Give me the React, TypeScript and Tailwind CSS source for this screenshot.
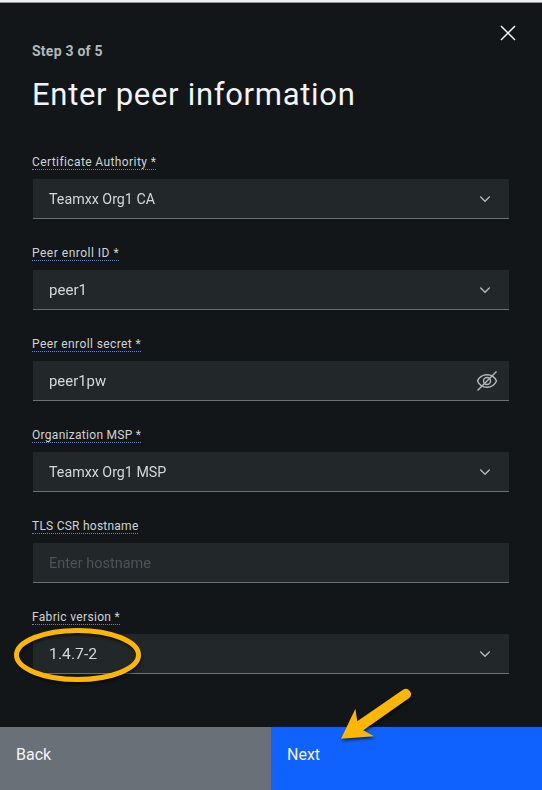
import React from "react";

type Field = {
  label: string;
  labelTracking: string;
  value: string;
  valueScale: string;
  icon: "chevron" | "eye" | "none";
  placeholder?: boolean;
};

const fields: Field[] = [
  { label: "Certificate Authority *", labelTracking: "tracking-[0.4px]", value: "Teamxx Org1 CA", valueScale: "scale-x-[0.92]", icon: "chevron" },
  { label: "Peer enroll ID *", labelTracking: "tracking-[0.5px]", value: "peer1", valueScale: "scale-x-[0.97]", icon: "chevron" },
  { label: "Peer enroll secret *", labelTracking: "tracking-[0.4px]", value: "peer1pw", valueScale: "scale-x-[0.96]", icon: "eye" },
  { label: "Organization MSP *", labelTracking: "tracking-[0.29px]", value: "Teamxx Org1 MSP", valueScale: "scale-x-[0.92]", icon: "chevron" },
  { label: "TLS CSR hostname", labelTracking: "tracking-[0.24px]", value: "Enter hostname", valueScale: "scale-x-[0.935]", icon: "none", placeholder: true },
  { label: "Fabric version *", labelTracking: "tracking-[0.33px]", value: "1.4.7-2", valueScale: "scale-x-[1.02]", icon: "chevron" },
];

function Chevron() {
  return (
    <svg className="mr-[16px] h-4 w-4" viewBox="0 0 16 16" fill="#c6c8ca">
      <path d="M8 11 3 6l.7-.7L8 9.6l4.300-4.300L13 6z" stroke="#c6c8ca" strokeWidth="0.3" />
    </svg>
  );
}

function EyeOff() {
  return (
    <svg className="mr-[11px] h-[22px] w-[22px]" viewBox="0 0 22 22" fill="none" stroke="#b4b8bb" strokeWidth="1.4">
      <path d="M1.500 11C3.200 7.200 6.800 4.800 11 4.800S18.800 7.200 20.500 11c-1.700 3.800-5.300 6.200-9.500 6.200S3.200 14.800 1.500 11z" />
      <circle cx="11" cy="11" r="3.500" />
      <path d="M1.500 20.500 20.500 1.500" />
    </svg>
  );
}

function FieldRow({ field }: { field: Field }) {
  return (
    <div className="h-[91px]">
      <div className="flex h-[25px] items-start">
        <span className={`-ml-px h-[16px] whitespace-nowrap border-b border-dotted border-[#5b86dc] text-[12px] leading-[17px] text-[#d0d3d5] ${field.labelTracking}`}>
          {field.label}
        </span>
      </div>
      <div className="flex h-[40px] items-center justify-between border-b border-[#697077] bg-[#22272a] pl-4">
        <span className={`origin-left whitespace-nowrap text-[15.5px] leading-5 ${field.placeholder ? "text-[#4d5358]" : "text-[#d5d8da]"} ${field.valueScale}`}>
          {field.value}
        </span>
        {field.icon === "chevron" && <Chevron />}
        {field.icon === "eye" && <EyeOff />}
      </div>
    </div>
  );
}

export default function App() {
  return (
    <div className="relative flex h-[790px] w-[542px] flex-col overflow-hidden border-t-[2px] border-[#f0f0f0] bg-[#121619] font-['Roboto','Liberation_Sans',sans-serif]">
      <header className="flex h-[152px] shrink-0 justify-between border-t border-[#929597] pl-[33px] pr-[26px]">
        <div className="pt-[38px]">
          <p className="-ml-px text-[14px] font-bold leading-5 tracking-[0.24px] text-[#b3b8bc]">Step 3 of 5</p>
          <h1 className="-ml-px mt-[14px] whitespace-nowrap text-[31px] leading-10 tracking-[0.7px] text-[#f2f4f8]">Enter peer information</h1>
        </div>
        <svg className="mt-[22px] h-4 w-4" viewBox="0 0 16 16" stroke="#f2f4f8" strokeWidth="1.500">
          <path d="M1 1l14 14M15 1 1 15" />
        </svg>
      </header>
      <main className="h-[573px] shrink-0 px-[33px]">
        {fields.map((field) => (
          <FieldRow key={field.label} field={field} />
        ))}
      </main>
      <footer className="grid flex-1 grid-cols-2 text-[16px] leading-5 text-[#f2f4f8]">
        <button className="flex items-start bg-[#697077] pl-4 pt-[18px] text-left">Back</button>
        <button className="flex items-start bg-[#0f62fe] pl-4 pt-[18px] text-left">Next</button>
      </footer>
      <svg className="pointer-events-none absolute left-0 top-[-2px] h-[790px] w-[542px]" viewBox="0 0 542 790">
        <g className="drop-shadow-[1px_2px_1.5px_rgba(0,0,0,0.6)]">
          <ellipse cx="77.500" cy="655" rx="61" ry="24.500" fill="none" stroke="#fdb702" strokeWidth="5" />
          <path d="M341 738.800 355.400 708.800 357.300 721.300 403 689.800A5.200 5.200 0 0 1 409.500 697.800L363.300 730.300 374 736.300z" fill="#fdb702" />
        </g>
      </svg>
    </div>
  );
}
